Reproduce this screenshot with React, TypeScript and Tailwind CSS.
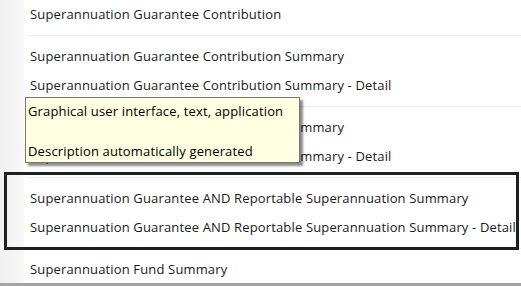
const groups: string[][] = [
  ['Superannuation Guarantee Contribution'],
  ['Superannuation Guarantee Contribution Summary', 'Superannuation Guarantee Contribution Summary - Detail'],
  ['Superannuation Guarantee Contribution Summary', 'Superannuation Guarantee Contribution Summary - Detail'],
  [
    'Superannuation Guarantee AND Reportable Superannuation Summary',
    'Superannuation Guarantee AND Reportable Superannuation Summary - Detail',
  ],
  ['Superannuation Fund Summary'],
];

export default function App() {
  return (
    <div
      className="relative flex h-[286px] w-[521px] flex-col overflow-hidden bg-white text-[13px] tracking-[0.15px] text-[#1a1a1a]"
      style={{ fontFamily: '"Open Sans", "Noto Sans", sans-serif' }}
    >
      <div className="flex flex-1 overflow-hidden">
        {/* left gutter */}
        <div className="w-[24px] shrink-0 bg-gradient-to-r from-[#f0f0f0] to-[#f7f7f7]" />

        <div className="flex-1">
          {groups.map((rows, gi) => (
            <div key={gi}>
              {rows.map((label, ri) => (
                <div key={ri} className="flex h-[29px] items-center pl-[6px] whitespace-nowrap">
                  {label}
                </div>
              ))}
              {gi < groups.length - 1 && <div className="my-[6px] ml-[3px] h-px bg-[#ebebeb]" />}
            </div>
          ))}
        </div>
      </div>

      <div className="h-[3px] shrink-0 bg-[#a3a3a3]" />

      {/* tooltip */}
      <div className="absolute left-[25px] top-[97px] h-[66px] w-[275px] border border-[#767676] bg-[#ffffe1] px-[2px] pt-[3px] leading-[20px] text-black shadow-[3px_3px_2px_rgba(0,0,0,0.45)]">
        <div>Graphical user interface, text, application</div>
        <div>&nbsp;</div>
        <div>Description automatically generated</div>
      </div>

      {/* highlight box */}
      <div className="absolute left-[4px] top-[172px] h-[78px] w-[515px] border-[3px] border-[#1f1f1f]" />
    </div>
  );
}
